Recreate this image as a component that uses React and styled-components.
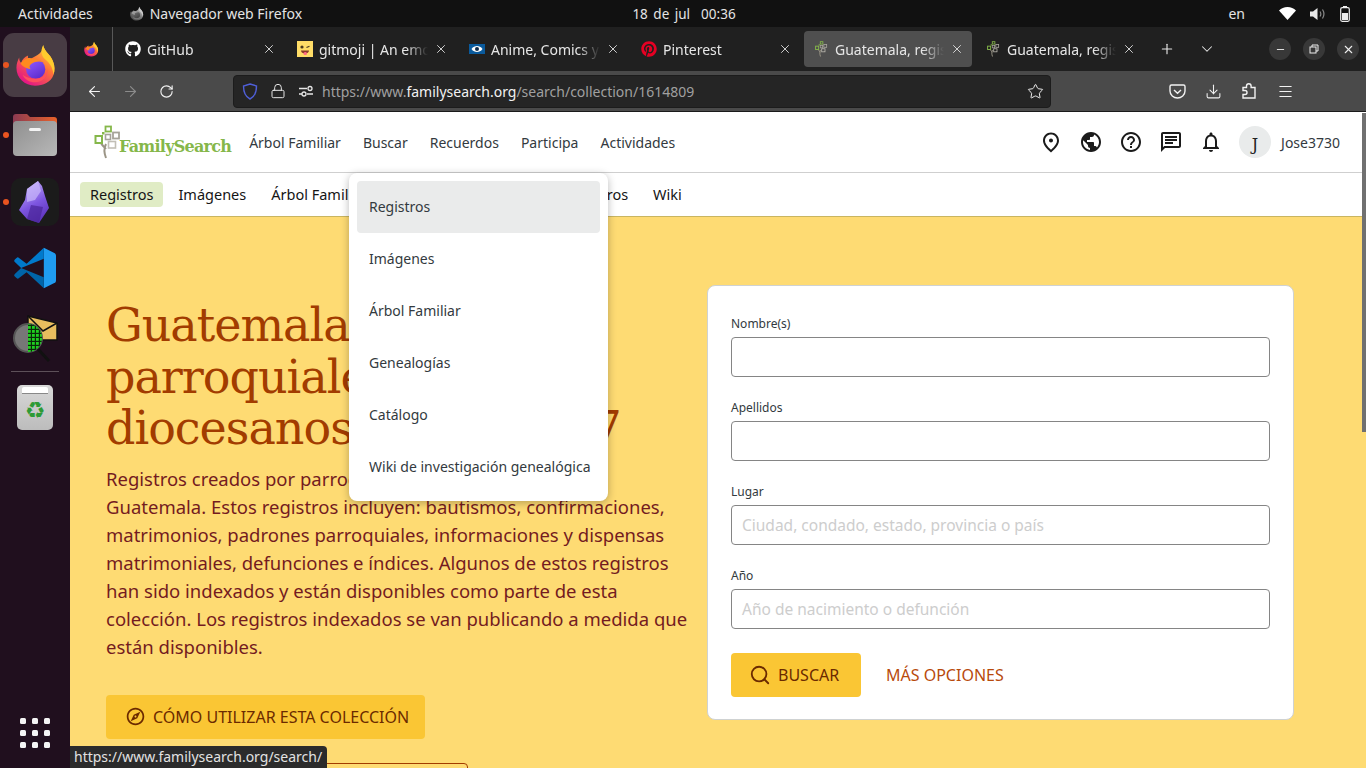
import React from 'react';
import styled, { createGlobalStyle } from 'styled-components';
import { ArrowLeft, ArrowRight, RotateCw, Lock, Star, Download, Menu, Plus, X, ChevronDown, Minus, Search } from 'lucide-react';
import { FaGithub, FaPinterest } from 'react-icons/fa';
import { MdOutlinePlace, MdPublic, MdHelpOutline, MdOutlineChat, MdOutlineNotifications, MdOutlineExplore } from 'react-icons/md';

const Global = createGlobalStyle`
  html, body { margin: 0; padding: 0; background: #111; }
  * { box-sizing: border-box; }
`;

const Screen = styled.div`
  width: 1366px;
  height: 768px;
  overflow: hidden;
  display: flex;
  flex-direction: column;
  font-family: "Noto Sans", sans-serif;
`;

const TopBar = styled.div`
  height: 27px;
  background: #111;
  color: #e4e4e4;
  font-size: 14px;
  display: grid;
  grid-template-columns: 1fr auto 1fr;
  align-items: center;
  padding: 0 16px 0 18px;
`;
const TopLeft = styled.div`
  display: flex;
  align-items: center;
`;
const AppName = styled.div`
  display: flex;
  align-items: center;
  gap: 6px;
  margin-left: 36px;
`;
const Clock = styled.div`
  font-size: 13.5px;
  word-spacing: 2px;
`;
const TopRight = styled.div`
  display: flex;
  align-items: center;
  justify-content: flex-end;
  gap: 14px;
`;
const Lang = styled.span`
  margin-right: 20px;
`;

const Desk = styled.div`
  flex: 1;
  display: flex;
  min-height: 0;
`;

const Dock = styled.div`
  width: 70px;
  flex: none;
  background: #200f1e;
  display: flex;
  flex-direction: column;
  align-items: center;
  padding: 6px 0 20px;
`;
const DockSlot = styled.div`
  position: relative;
  width: 70px;
  height: ${p => p.$h}px;
  margin-bottom: ${p => p.$mb || 0}px;
  display: flex;
  align-items: center;
  justify-content: center;
`;
const RunDot = styled.span`
  position: absolute;
  left: 3px;
  top: 50%;
  width: 6px;
  height: 6px;
  margin-top: -3px;
  border-radius: 50%;
  background: #e95420;
`;
const FoxTile = styled.div`
  width: 64px;
  height: 64px;
  border-radius: 11px;
  background: #483c44;
  display: flex;
  align-items: center;
  justify-content: center;
`;
const ObsidianTile = styled.div`
  width: 48px;
  height: 48px;
  border-radius: 10px;
  background: #1b1b1b;
  display: flex;
  align-items: center;
  justify-content: center;
`;
const DockLine = styled.div`
  width: 48px;
  height: 1px;
  background: #5d5059;
  margin: 9px 0 13px;
`;
const TrashBin = styled.div`
  width: 36px;
  height: 45px;
  border-radius: 5px;
  background: linear-gradient(#d8d8d8, #bcbcbc);
  display: flex;
  flex-direction: column;
  align-items: center;
`;
const TrashLid = styled.div`
  width: 26px;
  height: 7px;
  margin-top: 2px;
  background: #fff;
  border-radius: 2px 2px 0 0;
  border-bottom: 1px solid #888;
`;
const RecycleGlyph = styled.span`
  font-family: "DejaVu Sans", sans-serif;
  font-size: 23px;
  line-height: 32px;
  color: #2e9a35;
`;
const AppsGrid = styled.div`
  margin-top: auto;
  display: grid;
  grid-template-columns: repeat(3, 6px);
  gap: 6px;
`;
const AppsDot = styled.span`
  width: 6px;
  height: 6px;
  border-radius: 1.5px;
  background: #f4f4f4;
`;

const Browser = styled.div`
  position: relative;
  flex: 1;
  min-width: 0;
  display: flex;
  flex-direction: column;
`;

const TabStrip = styled.div`
  height: 44px;
  background: #202020;
  display: flex;
  align-items: stretch;
  flex: none;
`;
const PinnedTab = styled.div`
  width: 43px;
  border-right: 1px solid #585858;
  margin-right: 1px;
  display: flex;
  align-items: center;
  justify-content: center;
`;
const Tab = styled.div`
  width: 172px;
  padding: 0 10px 0 11px;
  display: flex;
  align-items: center;
  gap: 6px;
  color: #e6e6e6;
  font-size: 14px;
  position: relative;
  z-index: 0;
  &::before {
    content: '';
    position: absolute;
    z-index: -1;
    left: 2px;
    right: 2px;
    top: 4px;
    bottom: 4px;
    border-radius: 4px;
    background: ${p => (p.$active ? '#4f4f4f' : 'transparent')};
  }
`;
const FaviconBox = styled.span`
  width: 16px;
  height: 16px;
  flex: none;
  display: flex;
  align-items: center;
  justify-content: center;
  color: #fff;
`;
const TabTitle = styled.span`
  flex: 1;
  min-width: 0;
  white-space: nowrap;
  overflow: hidden;
  -webkit-mask-image: linear-gradient(to right, #000 80%, transparent 100%);
  mask-image: linear-gradient(to right, #000 80%, transparent 100%);
`;
const StripButton = styled.span`
  width: ${p => p.$w}px;
  display: flex;
  align-items: center;
  justify-content: center;
  color: #e6e6e6;
`;
const WinControls = styled.div`
  margin-left: auto;
  display: flex;
  align-items: center;
  gap: 12px;
  padding-right: 7px;
`;
const WinButton = styled.span`
  width: 22px;
  height: 22px;
  border-radius: 50%;
  background: #383838;
  display: flex;
  align-items: center;
  justify-content: center;
  color: #eee;
`;

const NavBar = styled.div`
  height: 41px;
  flex: none;
  background: #4a4a4a;
  border-bottom: 1px solid #1a1a1a;
  display: flex;
  align-items: center;
  color: #f2f2f2;
  padding-left: 6px;
`;
const NavButton = styled.span`
  width: 36px;
  display: flex;
  align-items: center;
  justify-content: center;
  color: ${p => (p.$off ? '#8c8c8c' : '#f2f2f2')};
`;
const UrlBar = styled.div`
  width: 818px;
  height: 33px;
  margin-left: 49px;
  margin-right: 108px;
  background: #252525;
  border: 1px solid #1c1c1c;
  border-radius: 4px;
  display: flex;
  align-items: center;
  padding: 0 6px 0 7px;
  font-size: 14px;
  color: #a0a0a0;
`;
const UrlIcon = styled.span`
  width: 18px;
  margin-right: 10px;
  display: flex;
  align-items: center;
  justify-content: center;
  color: #e6e6e6;
`;
const UrlText = styled.span`
  flex: 1;
  margin-left: -3px;
  white-space: nowrap;
`;
const UrlHost = styled.b`
  font-weight: 400;
  color: #f2f2f2;
`;

const Page = styled.div`
  flex: 1;
  min-height: 0;
  overflow: hidden;
  background: #fff;
  display: flex;
  flex-direction: column;
`;
const SiteHeader = styled.div`
  height: 61px;
  flex: none;
  border-bottom: 1px solid #cfcfcf;
  display: flex;
  align-items: center;
  padding: 0 26px 0 23px;
  color: #333a40;
`;
const Logo = styled.div`
  display: flex;
  align-items: flex-end;
  height: 34px;
  margin-right: 18px;
`;
const LogoText = styled.span`
  font-family: "DejaVu Serif", serif;
  font-weight: 700;
  font-size: 16px;
  letter-spacing: -0.75px;
  line-height: 24px;
  color: #85b74a;
  margin-left: -2px;
`;
const MainNav = styled.div`
  display: flex;
  gap: 22px;
  font-size: 14px;
`;
const HeaderRight = styled.div`
  margin-left: auto;
  display: flex;
  align-items: center;
  gap: 16px;
  color: #1b1b1b;
`;
const HeaderIcon = styled.span`
  width: 24px;
  height: 24px;
  display: flex;
  align-items: center;
  justify-content: center;
`;
const Avatar = styled.span`
  width: 32px;
  height: 32px;
  border-radius: 50%;
  background: #e9ebeb;
  font-family: "DejaVu Serif", serif;
  font-size: 16px;
  line-height: 38px;
  text-align: center;
  color: #222;
`;
const UserName = styled.span`
  margin-left: -6px;
  font-size: 14px;
  color: #333a40;
`;

const SubNav = styled.div`
  height: 44px;
  flex: none;
  display: flex;
  align-items: center;
  gap: 5px;
  padding-left: 10px;
  border-bottom: 1px solid #c9b560;
`;
const SubItem = styled.span`
  height: 25px;
  padding: 0 10px;
  border-radius: 4px;
  font-size: 14.5px;
  line-height: 24px;
  color: #151515;
  background: ${p => (p.$active ? '#e0ecc5' : 'transparent')};
`;

const Hero = styled.div`
  flex: 1;
  background: #fedb73;
  display: flex;
  align-items: flex-start;
  padding: 68px 72px 0 36px;
`;
const HeroText = styled.div`
  width: 590px;
  padding-top: 15px;
`;
const Title = styled.h1`
  margin: 0 0 10px;
  font-family: "DejaVu Serif", serif;
  font-weight: 400;
  font-size: 46px;
  line-height: 51.5px;
  letter-spacing: -1px;
  color: #a23c00;
  white-space: nowrap;
`;
const Lead = styled.p`
  margin: 0;
  font-size: 18.5px;
  line-height: 28px;
  color: #741b1f;
  white-space: nowrap;
`;
const GuideButton = styled.div`
  width: 319px;
  height: 44px;
  margin-top: 34px;
  background: #fac634;
  border-radius: 4px;
  display: flex;
  align-items: center;
  gap: 7px;
  padding-left: 19px;
  font-size: 16px;
  color: #6b2a00;
`;
const OutlineButton = styled.div`
  width: 362px;
  height: 44px;
  margin-top: 24px;
  border: 1px solid #a23c00;
  border-radius: 4px;
`;
const FormCard = styled.div`
  width: 587px;
  height: 435px;
  margin-left: auto;
  background: #fff;
  border: 1px solid #cfd2d2;
  border-radius: 8px;
  padding: 29px 23px 0;
`;
const Field = styled.div`
  margin-bottom: 22px;
`;
const FieldLabel = styled.div`
  font-size: 12px;
  line-height: 18px;
  height: 22px;
  color: #333a40;
`;
const FieldBox = styled.div`
  height: 40px;
  border: 1px solid #858585;
  border-radius: 4px;
  padding-left: 10px;
  font-size: 15.5px;
  line-height: 38px;
  color: #cdcdcd;
`;
const FormActions = styled.div`
  display: flex;
  align-items: center;
  gap: 25px;
  margin-top: 24px;
`;
const SearchButton = styled.div`
  width: 130px;
  height: 44px;
  background: #fac634;
  border-radius: 4px;
  display: flex;
  align-items: center;
  gap: 7px;
  padding-left: 18px;
  font-size: 16px;
  color: #6b2a00;
`;
const MoreLink = styled.span`
  font-size: 16px;
  color: #b84a0c;
`;

const DropMenu = styled.div`
  position: absolute;
  left: 279px;
  top: 146px;
  width: 259px;
  background: #fff;
  border-radius: 8px;
  padding: 8px;
  box-shadow: 0 2px 8px rgba(0, 0, 0, 0.28);
`;
const DropItem = styled.div`
  height: 52px;
  padding-left: 12px;
  border-radius: 4px;
  font-size: 14px;
  line-height: 52px;
  color: #333a40;
  white-space: nowrap;
  background: ${p => (p.$active ? '#eaebeb' : 'transparent')};
`;
const ScrollThumb = styled.div`
  position: absolute;
  right: 0;
  top: 86px;
  width: 4px;
  height: 319px;
  background: #707070;
`;
const StatusTip = styled.div`
  position: absolute;
  left: 0;
  bottom: 0;
  height: 22px;
  padding: 0 5px 0 4px;
  background: #2b2b2b;
  border-radius: 0 4px 0 0;
  font-size: 14px;
  line-height: 22px;
  color: #e2e2e2;
`;

const FoxIcon = ({ size, id, grey }) => (
  <svg width={size} height={size} viewBox="0 0 64 64" style={grey ? { filter: 'grayscale(1)' } : undefined}>
    <defs>
      <linearGradient id={`${id}a`} x1="0.85" y1="0.05" x2="0.25" y2="0.95">
        <stop offset="0" stopColor="#ffd13c" />
        <stop offset="0.45" stopColor="#ff7139" />
        <stop offset="1" stopColor="#e31587" />
      </linearGradient>
      <linearGradient id={`${id}b`} x1="0.2" y1="0" x2="0.8" y2="1">
        <stop offset="0" stopColor="#9059ff" />
        <stop offset="1" stopColor="#592acb" />
      </linearGradient>
    </defs>
    <path d="M44 3c1 9 10 13 14 23 3 7 3 14 1 20-4 11-15 16-27 16C17 62 5 51 5 36c0-6 2-11 4-15 0 4 1 6 3 8 1-5 5-9 10-11-1 3 0 5 2 6 5-3 11-5 15-9 3-3 5-7 5-12z" fill={`url(#${id}a)`} />
    <path d="M44 3c1 9 10 13 14 23 3 7 3 14 1 20-1-9-5-17-12-22-5-4-8-12-3-21z" fill="#ffcb2e" />
    <circle cx="33" cy="38" r="14" fill={`url(#${id}b)`} />
    <path d="M11 30c3-5 9-9 15-8 5 1 13 1 18 6-6-2-12-1-17 2-3 2-4 5-1 8-6-1-11-3-15-8z" fill="#ff8a1f" />
    <path d="M33 52c9 0 17-6 17-15 2 11-7 20-18 20-8 0-15-4-18-11 5 4 12 6 19 6z" fill="#ff4f5e" />
  </svg>
);

const TreeIcon = ({ w, h }) => (
  <svg width={w} height={h} viewBox="0 0 28 34" fill="none">
    <path d="M13 33c-2-5-2-10 0-14M13 24c-2-2-4-4-5-6" stroke="#9b9586" strokeWidth="2" />
    <rect x="12.5" y="1.5" width="5.5" height="5" stroke="#85b74a" strokeWidth="1.8" />
    <rect x="2.5" y="11" width="6.5" height="7" stroke="#85b74a" strokeWidth="2" />
    <rect x="12.5" y="9.5" width="5" height="5" stroke="#a6a39a" strokeWidth="1.6" />
    <rect x="20" y="7.5" width="6" height="6" stroke="#a6a39a" strokeWidth="1.8" />
    <rect x="15.5" y="16.5" width="7" height="6.5" stroke="#c2bfb6" strokeWidth="1.6" />
    <rect x="9" y="7" width="2.5" height="2.5" fill="#85b74a" />
  </svg>
);

const GitmojiIcon = () => (
  <svg width="16" height="16" viewBox="0 0 16 16">
    <rect width="16" height="16" fill="#ffdd67" />
    <circle cx="5" cy="6" r="1.6" fill="#4a3a20" />
    <path d="M9.5 6.5l3-1.2" stroke="#4a3a20" strokeWidth="1.2" />
    <path d="M4 9.5h8c0 2-1.8 3-4 3s-4-1-4-3z" fill="#8b3a2a" />
    <rect x="6.5" y="11" width="3.5" height="3" rx="1.5" fill="#ff6b81" />
  </svg>
);

const EyeIcon = () => (
  <svg width="16" height="16" viewBox="0 0 16 16">
    <rect y="3" width="16" height="10" fill="#0a5a9c" />
    <path d="M2.5 8C4 5.8 6 5 8 5s4 .8 5.500 3C12 10.200 10 11 8 11s-4-.8-5.500-3z" fill="#fff" />
    <circle cx="8" cy="8" r="2" fill="#0d2a4a" />
  </svg>
);

const PermsIcon = () => (
  <svg width="16" height="16" viewBox="0 0 16 16" fill="none" stroke="currentColor" strokeWidth="1.3">
    <path d="M1 5.500h8M1 11h3M9 11h6" />
    <circle cx="12" cy="5.500" r="2" />
    <circle cx="6" cy="11" r="2" />
  </svg>
);

const ShieldIcon = () => (
  <svg width="16" height="17" viewBox="0 0 16 17" fill="none" stroke="#4f5fd8" strokeWidth="1.4">
    <path d="M8 1l6.500 2c0 6-1.500 10.500-6.500 13C3 13.500 1.500 9 1.500 3z" />
  </svg>
);

const PocketIcon = () => (
  <svg width="17" height="17" viewBox="0 0 17 17" fill="none" stroke="currentColor" strokeWidth="1.4">
    <path d="M2.500 2h12c.8 0 1.500.6 1.500 1.500V8c0 4-3.500 7-7.500 7S1 12 1 8V3.500C1 2.600 1.700 2 2.500 2z" />
    <path d="M5 7l3.500 3.200L12 7" />
  </svg>
);

const PuzzleIcon = () => (
  <svg width="18" height="18" viewBox="0 0 18 18" fill="none" stroke="currentColor" strokeWidth="1.4">
    <path d="M3 5.500h3.500V4a2.300 2.300 0 014.600 0v1.500H15V16H3v-3.500h2a2 2 0 000-4H3z" />
  </svg>
);

const RestoreIcon = () => (
  <svg width="10" height="10" viewBox="0 0 10 10" fill="none" stroke="currentColor" strokeWidth="1">
    <rect x="1" y="3" width="6" height="6" />
    <path d="M3 3V1h6v6H7" />
  </svg>
);

const WifiIcon = () => (
  <svg width="17" height="13" viewBox="0 0 17 13" fill="#fff">
    <path d="M8.500 13L0 3.500C2.200 1.300 5.200 0 8.500 0S14.800 1.300 17 3.500z" />
  </svg>
);

const VolumeIcon = () => (
  <svg width="16" height="14" viewBox="0 0 16 14" fill="none">
    <path d="M0 4.500h3L7.500 1v12L3 9.500H0z" fill="#e8e8e8" />
    <path d="M10 4.500c1 1.500 1 3.500 0 5M12.500 2.500c1.800 2.800 1.800 6.200 0 9" stroke="#8a8a8a" strokeWidth="1.2" />
  </svg>
);

const BatteryIcon = () => (
  <svg width="10" height="16" viewBox="0 0 10 16" fill="none">
    <rect x="3" y="0" width="4" height="2" fill="#eee" />
    <rect x="0.700" y="1.700" width="8.600" height="13.600" rx="1.500" stroke="#eee" strokeWidth="1.200" />
    <rect x="2" y="7" width="6" height="7" fill="#eee" />
  </svg>
);

const FolderIcon = () => (
  <svg width="44" height="43" viewBox="0 0 44 43">
    <defs>
      <linearGradient id="folderTop" x1="0" y1="0" x2="1" y2="0">
        <stop offset="0" stopColor="#8c3a52" />
        <stop offset="1" stopColor="#e9622a" />
      </linearGradient>
      <linearGradient id="folderBody" x1="0" y1="0" x2="1" y2="1">
        <stop offset="0" stopColor="#8f8f8f" />
        <stop offset="1" stopColor="#b8b8b8" />
      </linearGradient>
    </defs>
    <path d="M0 12V4c0-2 1-3 3-3h11l3 3h24c2 0 3 1 3 3v8z" fill="url(#folderTop)" />
    <rect y="8" width="44" height="35" rx="4" fill="url(#folderBody)" />
    <rect x="16" y="15" width="12" height="3" rx="1.500" fill="#f4f4f4" />
  </svg>
);

const ObsidianIcon = () => (
  <svg width="32" height="42" viewBox="0 0 32 42">
    <defs>
      <linearGradient id="obs" x1="0.3" y1="0" x2="0.7" y2="1">
        <stop offset="0" stopColor="#c4b0fa" />
        <stop offset="0.55" stopColor="#7d55e0" />
        <stop offset="1" stopColor="#5a30b8" />
      </linearGradient>
    </defs>
    <path d="M19 0L8 8 6 19l-6 10 8 9 12 4 4-6 6-9-4-12-3-10z" fill="url(#obs)" />
    <path d="M8 8l11-8 3 10-6 9-8 2z" fill="#c9b8fb" opacity="0.7" />
    <path d="M8 38l4-14 12 2-4 16z" fill="#4a2599" opacity="0.7" />
  </svg>
);

const VsCodeIcon = () => (
  <svg width="42" height="42" viewBox="0 0 100 100">
    <path d="M71 2l25 12c3 1 4 4 4 7v58c0 3-1 6-4 7L71 98z" fill="#1f9cf0" />
    <path d="M71 98L30 60 12 74c-2 2-4 2-6 0l-4-4c-2-2-2-4 0-6l15-14L71 72z" fill="#0065a9" />
    <path d="M71 2L30 40 12 26c-2-2-4-2-6 0l-4 4c-2 2-2 4 0 6l15 14L71 28z" fill="#007acc" />
  </svg>
);

const MailSearchIcon = () => (
  <svg width="46" height="48" viewBox="0 0 46 48">
    <defs>
      <pattern id="mesh" width="4" height="4" patternUnits="userSpaceOnUse">
        <rect width="4" height="4" fill="#0a2a0a" />
        <rect width="2.800" height="2.800" fill="#1fd01f" />
      </pattern>
    </defs>
    <path d="M16 2l29 7v17l-24 0-5-8z" fill="#e8bd5e" stroke="#111" strokeWidth="1.500" />
    <path d="M16 2l15 15 14-8" fill="none" stroke="#111" strokeWidth="1.500" />
    <circle cx="16" cy="24" r="14" fill="#777" stroke="#555" strokeWidth="2" />
    <path d="M16 10a14 14 0 010 28z" fill="url(#mesh)" />
    <path d="M26 35l11 12" stroke="#111" strokeWidth="3" />
  </svg>
);

const tabs = [
  { title: 'GitHub', icon: <FaGithub size={16} /> },
  { title: 'gitmoji | An emoji guide', icon: <GitmojiIcon /> },
  { title: 'Anime, Comics y Games', icon: <EyeIcon /> },
  { title: 'Pinterest', icon: <FaPinterest size={16} color="#e60023" /> },
  { title: 'Guatemala, registros', icon: <TreeIcon w={14} h={16} />, active: true },
  { title: 'Guatemala, registros', icon: <TreeIcon w={14} h={16} /> },
];

const menuItems = ['Registros', 'Imágenes', 'Árbol Familiar', 'Genealogías', 'Catálogo', 'Wiki de investigación genealógica'];
const subItems = ['Registros', 'Imágenes', 'Árbol Familiar', 'Genealogías', 'Catálogo', 'Libros', 'Wiki'];

const fields = [
  { label: 'Nombre(s)' },
  { label: 'Apellidos' },
  { label: 'Lugar', hint: 'Ciudad, condado, estado, provincia o país' },
  { label: 'Año', hint: 'Año de nacimiento o defunción' },
];

export default function App() {
  return (
    <Screen>
      <Global />
      <TopBar>
        <TopLeft>
          <span>Actividades</span>
          <AppName>
            <FoxIcon size={15} id="fxTop" grey />
            Navegador web Firefox
          </AppName>
        </TopLeft>
        <Clock>18 de jul&nbsp; 00:36</Clock>
        <TopRight>
          <Lang>en</Lang>
          <WifiIcon />
          <VolumeIcon />
          <BatteryIcon />
        </TopRight>
      </TopBar>
      <Desk>
        <Dock>
          <DockSlot $h={64} $mb={16}>
            <RunDot />
            <FoxTile>
              <FoxIcon size={44} id="fxDock" />
            </FoxTile>
          </DockSlot>
          <DockSlot $h={43} $mb={22}>
            <RunDot />
            <FolderIcon />
          </DockSlot>
          <DockSlot $h={48} $mb={21}>
            <RunDot />
            <ObsidianTile>
              <ObsidianIcon />
            </ObsidianTile>
          </DockSlot>
          <DockSlot $h={42} $mb={25}>
            <VsCodeIcon />
          </DockSlot>
          <DockSlot $h={48}>
            <MailSearchIcon />
          </DockSlot>
          <DockLine />
          <DockSlot $h={45}>
            <TrashBin>
              <TrashLid />
              <RecycleGlyph>♻</RecycleGlyph>
            </TrashBin>
          </DockSlot>
          <AppsGrid>
            {Array.from({ length: 9 }, (_, i) => (
              <AppsDot key={i} />
            ))}
          </AppsGrid>
        </Dock>
        <Browser>
          <TabStrip>
            <PinnedTab>
              <FoxIcon size={16} id="fxTab" />
            </PinnedTab>
            {tabs.map((t, i) => (
              <Tab key={i} $active={t.active}>
                <FaviconBox>{t.icon}</FaviconBox>
                <TabTitle>{t.title}</TabTitle>
                <X size={14} strokeWidth={1.5} />
              </Tab>
            ))}
            <StripButton $w={36} style={{ marginLeft: 3 }}>
              <Plus size={16} strokeWidth={1.7} />
            </StripButton>
            <StripButton $w={44}>
              <ChevronDown size={18} strokeWidth={1.4} />
            </StripButton>
            <WinControls>
              <WinButton><Minus size={11} /></WinButton>
              <WinButton><RestoreIcon /></WinButton>
              <WinButton><X size={13} strokeWidth={2} /></WinButton>
            </WinControls>
          </TabStrip>
          <NavBar>
            <NavButton><ArrowLeft size={17} strokeWidth={1.6} /></NavButton>
            <NavButton $off><ArrowRight size={17} strokeWidth={1.6} /></NavButton>
            <NavButton><RotateCw size={15} strokeWidth={1.8} /></NavButton>
            <UrlBar>
              <UrlIcon><ShieldIcon /></UrlIcon>
              <UrlIcon><Lock size={16} strokeWidth={1.5} /></UrlIcon>
              <UrlIcon><PermsIcon /></UrlIcon>
              <UrlText>https://www.<UrlHost>familysearch.org</UrlHost>/search/collection/1614809</UrlText>
              <Star size={17} strokeWidth={1.4} color="#eee" />
            </UrlBar>
            <NavButton><PocketIcon /></NavButton>
            <NavButton><Download size={17} strokeWidth={1.5} /></NavButton>
            <NavButton><PuzzleIcon /></NavButton>
            <NavButton><Menu size={17} strokeWidth={1.5} /></NavButton>
          </NavBar>
          <Page>
            <SiteHeader>
              <Logo>
                <TreeIcon w={28} h={34} />
                <LogoText>FamilySearch</LogoText>
              </Logo>
              <MainNav>
                <span>Árbol Familiar</span>
                <span>Buscar</span>
                <span>Recuerdos</span>
                <span>Participa</span>
                <span>Actividades</span>
              </MainNav>
              <HeaderRight>
                <HeaderIcon><MdOutlinePlace size={25} /></HeaderIcon>
                <HeaderIcon><MdPublic size={24} /></HeaderIcon>
                <HeaderIcon><MdHelpOutline size={24} /></HeaderIcon>
                <HeaderIcon><MdOutlineChat size={24} /></HeaderIcon>
                <HeaderIcon><MdOutlineNotifications size={24} /></HeaderIcon>
                <Avatar>J</Avatar>
                <UserName>Jose3730</UserName>
              </HeaderRight>
            </SiteHeader>
            <SubNav>
              {subItems.map((s, i) => (
                <SubItem key={s} $active={i === 0}>{s}</SubItem>
              ))}
            </SubNav>
            <Hero>
              <HeroText>
                <Title>
                  Guatemala, registros<br />
                  parroquiales y<br />
                  diocesanos, 1581-1977
                </Title>
                <Lead>
                  Registros creados por parroquias y diócesis de<br />
                  Guatemala. Estos registros incluyen: bautismos, confirmaciones,<br />
                  matrimonios, padrones parroquiales, informaciones y dispensas<br />
                  matrimoniales, defunciones e índices. Algunos de estos registros<br />
                  han sido indexados y están disponibles como parte de esta<br />
                  colección. Los registros indexados se van publicando a medida que<br />
                  están disponibles.
                </Lead>
                <GuideButton>
                  <MdOutlineExplore size={21} />
                  CÓMO UTILIZAR ESTA COLECCIÓN
                </GuideButton>
                <OutlineButton />
              </HeroText>
              <FormCard>
                {fields.map(f => (
                  <Field key={f.label}>
                    <FieldLabel>{f.label}</FieldLabel>
                    <FieldBox>{f.hint}</FieldBox>
                  </Field>
                ))}
                <FormActions>
                  <SearchButton>
                    <Search size={22} strokeWidth={2} />
                    BUSCAR
                  </SearchButton>
                  <MoreLink>MÁS OPCIONES</MoreLink>
                </FormActions>
              </FormCard>
            </Hero>
          </Page>
          <DropMenu>
            {menuItems.map((m, i) => (
              <DropItem key={m} $active={i === 0}>{m}</DropItem>
            ))}
          </DropMenu>
          <ScrollThumb />
          <StatusTip>https://www.familysearch.org/search/</StatusTip>
        </Browser>
      </Desk>
    </Screen>
  );
}
